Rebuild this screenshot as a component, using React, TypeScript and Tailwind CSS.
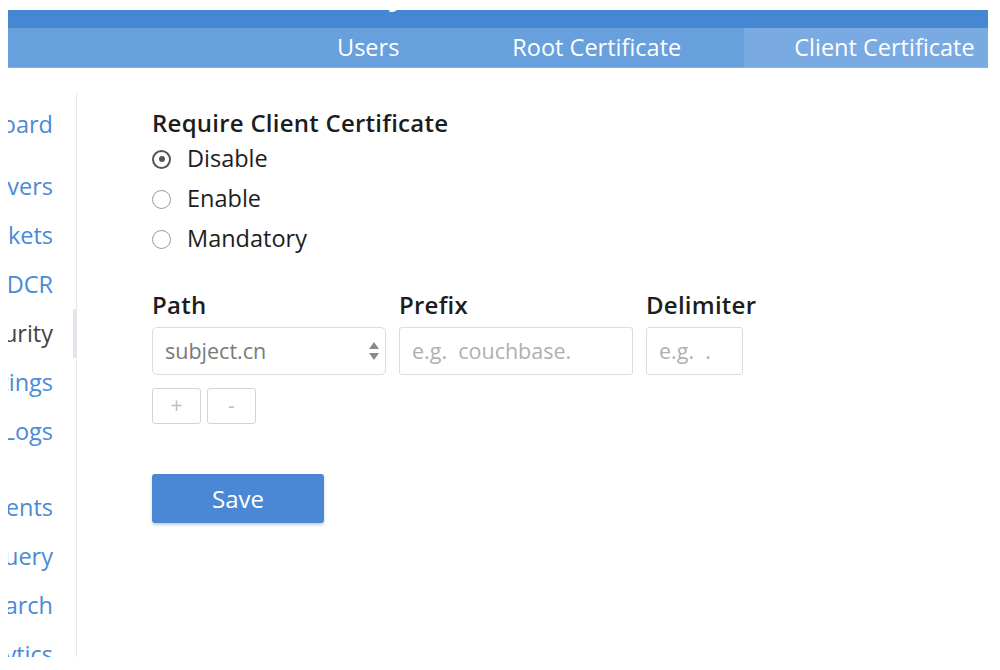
import React from "react";

const sidebarItems = [
  { label: "Dashboard", gapAfter: "mb-[13px]" },
  { label: "Servers" },
  { label: "Buckets" },
  { label: "XDCR" },
  { label: "Security", active: true },
  { label: "Settings" },
  { label: "Logs", gapAfter: "mb-[27px]" },
  { label: "Documents" },
  { label: "Query" },
  { label: "Search" },
  { label: "Analytics" },
];

const tabs = [
  { label: "Users" },
  { label: "Root Certificate" },
  { label: "Client Certificate", active: true },
];

const radioOptions = [
  { label: "Disable", checked: true },
  { label: "Enable" },
  { label: "Mandatory" },
];

function Radio({ checked }: { checked?: boolean }) {
  if (checked) {
    return (
      <span className="flex h-[19px] w-[19px] items-center justify-center rounded-full border-[2px] border-[#555]">
        <span className="h-[6px] w-[6px] rounded-full bg-[#555]"></span>
      </span>
    );
  }
  return <span className="h-[19px] w-[19px] rounded-full border border-[#9a9a9a]"></span>;
}

export default function App() {
  return (
    <div className="h-[670px] w-[1000px] bg-white pl-[8px] pt-[10px] font-['Open_Sans',sans-serif]">
      <div className="flex h-[647px] w-[980px] flex-col overflow-hidden">
        {/* page title bar, mostly cut off */}
        <div className="h-[18px] shrink-0 overflow-hidden bg-[#4687d4]">
          <div className="mt-[-38px] pl-[265px] text-[36px] leading-none text-white whitespace-nowrap">
            Security
          </div>
        </div>

        {/* tab bar */}
        <div className="flex h-[40px] shrink-0 overflow-hidden border-b border-[#82b2e8] bg-[#689fdd] pl-[279px]">
          {tabs.map((tab) => (
            <div
              key={tab.label}
              className={`flex shrink-0 items-center whitespace-nowrap pl-[50px] pr-[63px] text-[23.5px] text-white ${
                tab.active ? "bg-[#7aaae2]" : ""
              }`}
            >
              {tab.label}
            </div>
          ))}
        </div>

        <div className="flex flex-1">
          {/* sidebar */}
          <div className="mt-[25px] w-[69px] shrink-0 overflow-hidden border-r border-[#e6e6e6] pt-[7px]">
            {sidebarItems.map((item) => (
              <div
                key={item.label}
                className={`flex h-[49px] items-center justify-end whitespace-nowrap text-[23.5px] ${
                  item.gapAfter ?? ""
                } ${item.active ? "border-r-[3px] border-[#dde7f4] pr-[20px] text-[#444]" : "pr-[23px] text-[#4a8ad6]"}`}
              >
                {item.label}
              </div>
            ))}
          </div>

          {/* main */}
          <div className="flex-1 pl-[75px] pt-[40px] text-[#1d1d1d]">
            <div className="text-[24px] font-semibold leading-[30px] tracking-[0.01em]">Require Client Certificate</div>
            <div className="mt-[1px]">
              {radioOptions.map((opt) => (
                <div key={opt.label} className="flex h-[40px] items-center">
                  <Radio checked={opt.checked} />
                  <span className="ml-[16px] text-[23.5px]">{opt.label}</span>
                </div>
              ))}
            </div>

            <div className="mt-[31px] flex gap-[13px]">
              <div className="w-[234px]">
                <div className="text-[24px] font-semibold leading-[30px] tracking-[0.01em]">Path</div>
                <div className="mt-[7px] flex h-[48px] items-center justify-between rounded-[5px] border border-[#dcdcdc] pl-[12px] pr-[5px]">
                  <span className="text-[21.5px] text-[#7a7a7a]">subject.cn</span>
                  <svg width="12" height="22" viewBox="0 0 12 22">
                    <path d="M6 2 L11 9 L1 9 Z" fill="#8a8a8a" />
                    <path d="M1 13 L11 13 L6 20 Z" fill="#8a8a8a" />
                  </svg>
                </div>
              </div>
              <div className="w-[234px]">
                <div className="text-[24px] font-semibold leading-[30px] tracking-[0.01em]">Prefix</div>
                <div className="mt-[7px] flex h-[48px] items-center rounded-[3px] border border-[#dcdcdc] px-[12px]">
                  <span className="whitespace-pre text-[21.5px] text-[#b0b0b0]">e.g.  couchbase.</span>
                </div>
              </div>
              <div className="w-[97px]">
                <div className="whitespace-nowrap text-[24px] font-semibold leading-[30px] tracking-[0.01em]">Delimiter</div>
                <div className="mt-[7px] flex h-[48px] items-center rounded-[3px] border border-[#dcdcdc] px-[12px]">
                  <span className="whitespace-pre text-[21.5px] text-[#b0b0b0]">e.g.  .</span>
                </div>
              </div>
            </div>

            <div className="mt-[13px] flex gap-[6px]">
              <button className="flex h-[36px] w-[49px] items-center justify-center rounded-[3px] border border-[#d4d4d4] text-[21px] text-[#c0c0c0]">
                +
              </button>
              <button className="flex h-[36px] w-[49px] items-center justify-center rounded-[3px] border border-[#d4d4d4] text-[21px] text-[#c0c0c0]">
                -
              </button>
            </div>

            <button className="mt-[50px] flex h-[49px] w-[172px] items-center justify-center rounded-[3px] bg-[#4a88d6] text-[24px] text-white shadow-[0_2px_3px_rgba(0,0,0,0.2)]">
              Save
            </button>
          </div>
        </div>
      </div>
    </div>
  );
}
